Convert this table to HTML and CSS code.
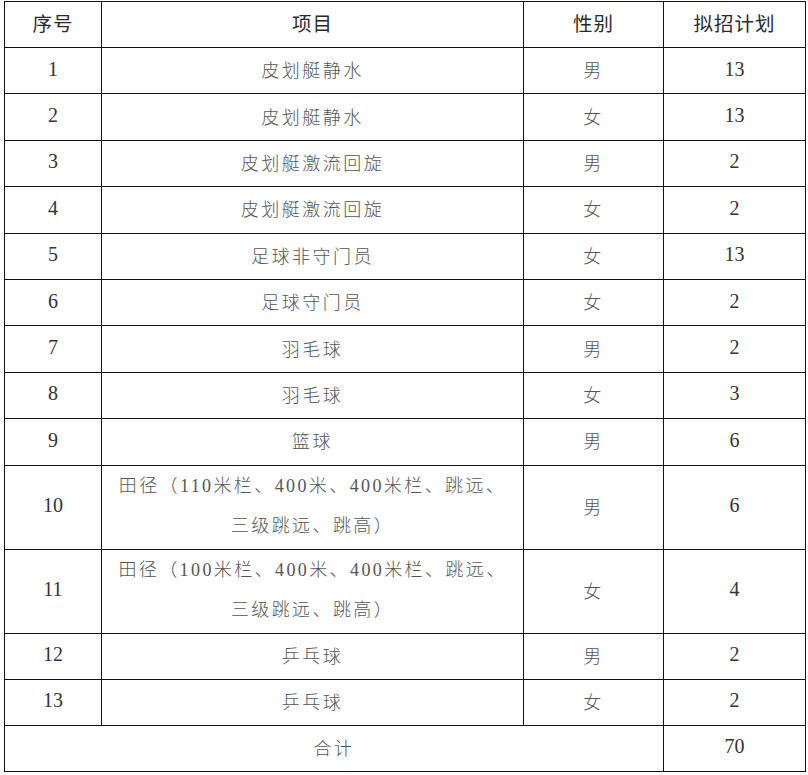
FILE: index.html
```html
<!DOCTYPE html>
<html lang="zh">
<head>
<meta charset="utf-8">
<link rel="stylesheet" href="styles.css">
</head>
<body>
<table class="plan">
  <colgroup>
    <col class="c-no"><col class="c-item"><col class="c-sex"><col class="c-num">
  </colgroup>
  <tr class="head">
    <th>序号</th><th>项目</th><th>性别</th><th>拟招计划</th>
  </tr>
  <tr><td class="num">1</td><td class="txt">皮划艇静水</td><td class="txt">男</td><td class="num">13</td></tr>
  <tr><td class="num">2</td><td class="txt">皮划艇静水</td><td class="txt">女</td><td class="num">13</td></tr>
  <tr><td class="num">3</td><td class="txt">皮划艇激流回旋</td><td class="txt">男</td><td class="num">2</td></tr>
  <tr><td class="num">4</td><td class="txt">皮划艇激流回旋</td><td class="txt">女</td><td class="num">2</td></tr>
  <tr><td class="num">5</td><td class="txt">足球非守门员</td><td class="txt">女</td><td class="num">13</td></tr>
  <tr><td class="num">6</td><td class="txt">足球守门员</td><td class="txt">女</td><td class="num">2</td></tr>
  <tr><td class="num">7</td><td class="txt">羽毛球</td><td class="txt">男</td><td class="num">2</td></tr>
  <tr><td class="num">8</td><td class="txt">羽毛球</td><td class="txt">女</td><td class="num">3</td></tr>
  <tr><td class="num">9</td><td class="txt">篮球</td><td class="txt">男</td><td class="num">6</td></tr>
  <tr class="tall"><td class="num">10</td><td class="txt multi">田径（110米栏、400米、400米栏、跳远、<br>三级跳远、跳高）</td><td class="txt">男</td><td class="num">6</td></tr>
  <tr class="tall"><td class="num">11</td><td class="txt multi">田径（100米栏、400米、400米栏、跳远、<br>三级跳远、跳高）</td><td class="txt">女</td><td class="num">4</td></tr>
  <tr class="low"><td class="num">12</td><td class="txt">乒乓球</td><td class="txt">男</td><td class="num">2</td></tr>
  <tr class="low"><td class="num">13</td><td class="txt">乒乓球</td><td class="txt">女</td><td class="num">2</td></tr>
  <tr class="low"><td class="txt" colspan="3">合计</td><td class="num">70</td></tr>
</table>
</body>
</html>
```
FILE: styles.css
```css
html, body {
  margin: 0;
  padding: 0;
  background: #fff;
}
body {
  padding: 1px 0 0 4px;
}
.plan {
  border-collapse: collapse;
  table-layout: fixed;
  width: 801px;
}
.c-no { width: 97px; }
.c-item { width: 422px; }
.c-sex { width: 140px; }
.c-num { width: 142px; }
.plan th, .plan td {
  border: 1px solid #111;
  padding: 0 0 3px 0;
  text-align: center;
  vertical-align: middle;
}
.plan tr { height: 46.4px; }
.plan tr.head { height: 46px; }
.plan tr.tall { height: 83px; }
.plan tr.low { height: 46px; }
.plan th {
  font-family: "Noto Sans CJK SC", "Noto Sans", sans-serif;
  font-size: 19.5px;
  font-weight: 400;
  color: #2a2a2a;
  letter-spacing: 1px;
  padding-bottom: 5px;
}
.num {
  font-family: "Liberation Serif", serif;
  font-size: 20px;
  color: #333;
}
.txt {
  font-family: "Liberation Serif", "Noto Sans CJK SC", serif;
  font-size: 18px;
  font-weight: 300;
  color: #555;
  letter-spacing: 2.5px;
}
.plan td.multi {
  line-height: 40px;
  letter-spacing: 2.4px;
  padding-bottom: 3px;
}
```
